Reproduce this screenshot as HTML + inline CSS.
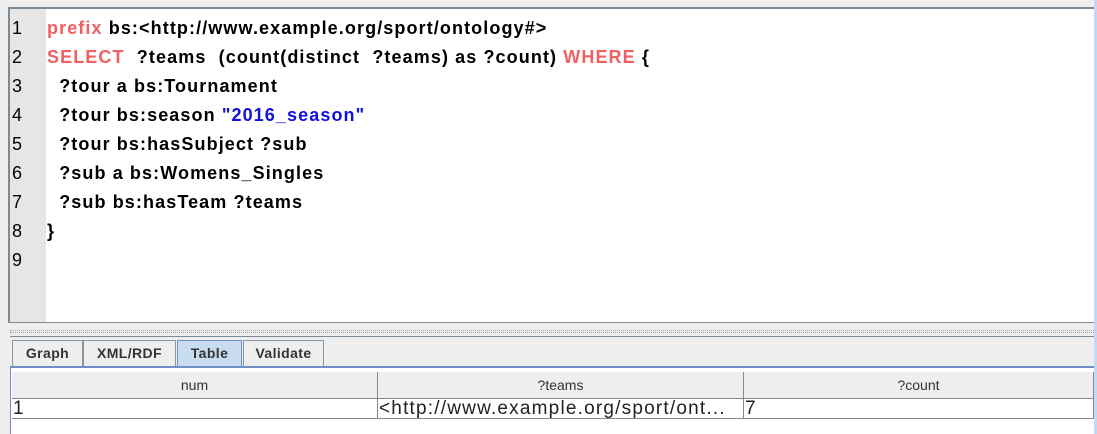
<!DOCTYPE html>
<html><head><style>
*{margin:0;padding:0;box-sizing:border-box}
body{width:1097px;height:434px;background:#eeeeee;position:relative;overflow:hidden;font-family:"Liberation Sans",Arial,sans-serif}
.abs{position:absolute}
#ed{left:8px;top:7px;width:1086px;height:316px;background:#fff;border-top:2px solid #7a8a99;border-left:2px solid #7a8a99;border-bottom:1px solid #7a8a99}
#gut{left:10px;top:9px;width:36px;height:313px;background:#e6e6e6}
.ln{position:absolute;left:12px;font-size:18px;color:#000}
.code{position:absolute;left:47px;font-size:18px;font-weight:bold;color:#000;white-space:pre;letter-spacing:1.1px}
.k{color:#f06060}.s{color:#1010e0}
#dots{left:10px;top:330px;width:1084px;height:3px;border-top:1px dotted #9aa;border-bottom:1px dotted #9aa}
#tabline{left:10px;top:336px;width:1084px;height:1px;background:#7a8a99}
.tab{position:absolute;top:340px;height:27px;border:1px solid #8a96a3;border-bottom:none;background:#eeeeee;font-size:14px;font-weight:bold;color:#333;text-align:center;line-height:25px;letter-spacing:0.4px}
#tp{left:10px;top:366px;width:1084px;height:68px;border-top:2px solid #6f8fc8;border-left:1px solid #6f8fc8;background:#fff}
.hd{position:absolute;top:372px;height:27px;background:#eeeeee;border-right:1px solid #888;border-bottom:1px solid #888;font-size:14px;color:#333;text-align:center;line-height:27px}
.cell{position:absolute;top:399px;height:20px;border-right:1px solid #888;border-bottom:1px solid #888;font-size:19px;color:#222;line-height:19px;padding-left:1px;white-space:nowrap;overflow:hidden;letter-spacing:1.2px}
#rb{left:1094px;top:0;width:3px;height:434px;background:#c5daf0}
</style></head><body>
<div class="abs" id="ed"></div>
<div class="abs" id="gut"></div>
<div class="ln" style="top:18px">1</div>
<div class="ln" style="top:47px">2</div>
<div class="ln" style="top:76px">3</div>
<div class="ln" style="top:105px">4</div>
<div class="ln" style="top:134px">5</div>
<div class="ln" style="top:163px">6</div>
<div class="ln" style="top:192px">7</div>
<div class="ln" style="top:221px">8</div>
<div class="ln" style="top:250px">9</div>
<div class="code" style="top:18px"><span class="k">prefix</span> bs:&lt;http://www.example.org/sport/ontology#&gt;</div>
<div class="code" style="top:47px"><span class="k">SELECT</span>  ?teams  (count(distinct  ?teams) as ?count) <span class="k">WHERE</span> {</div>
<div class="code" style="top:76px">  ?tour a bs:Tournament</div>
<div class="code" style="top:105px">  ?tour bs:season <span class="s">"2016_season"</span></div>
<div class="code" style="top:134px">  ?tour bs:hasSubject ?sub</div>
<div class="code" style="top:163px">  ?sub a bs:Womens_Singles</div>
<div class="code" style="top:192px">  ?sub bs:hasTeam ?teams</div>
<div class="code" style="top:221px">}</div>
<div class="abs" id="dots"></div>
<div class="abs" id="tabline"></div>
<div class="tab" style="left:12px;width:71px">Graph</div>
<div class="tab" style="left:83px;width:93px">XML/RDF</div>
<div class="tab" style="left:177px;width:65px;background:#c8dcf0;border-color:#6f8fc8;height:28px">Table</div>
<div class="tab" style="left:243px;width:81px">Validate</div>
<div class="abs" id="tp"></div>
<div class="hd" style="left:12px;width:366px">num</div>
<div class="hd" style="left:378px;width:366px">?teams</div>
<div class="hd" style="left:744px;width:350px">?count</div>
<div class="cell" style="left:12px;width:366px">1</div>
<div class="cell" style="left:378px;width:366px">&lt;http://www.example.org/sport/ont...</div>
<div class="cell" style="left:744px;width:350px">7</div>
<div class="abs" id="rb"></div>
</body></html>
